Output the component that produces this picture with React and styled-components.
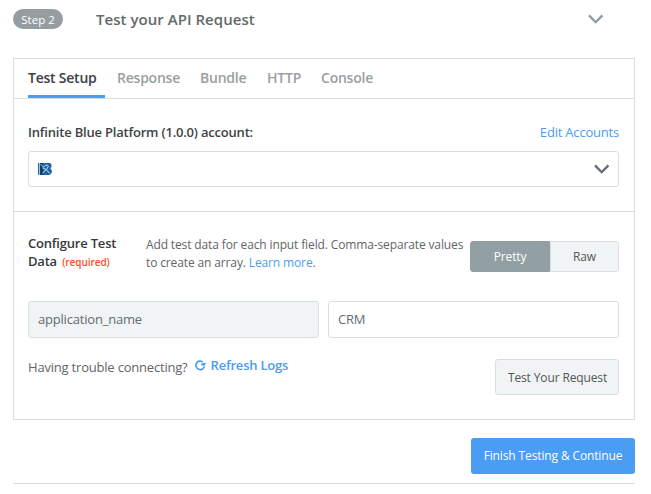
import React from "react";
import styled, { createGlobalStyle } from "styled-components";

const Global = createGlobalStyle`
  * { box-sizing: border-box; }
  body { margin: 0; background: #fff; font-family: "Open Sans", "Noto Sans", sans-serif; color: #5f6568; font-size: 13px; letter-spacing: -0.2px; }
  button, input { font: inherit; letter-spacing: inherit; margin: 0; }
`;

const Page = styled.main`
  width: 651px; height: 494px; padding: 9px 16px 0 13px; overflow: hidden;
`;
const StepHeader = styled.header`
  display: flex; align-items: center; height: 20px; padding-right: 32px;
`;
const StepBadge = styled.span`
  width: 50px; height: 20px; border-radius: 10px; background: #959da1; color: #fff;
  font-size: 11.5px; line-height: 21px; text-align: center; letter-spacing: 0;
`;
const StepTitle = styled.h1`
  margin: 0 auto 0 33px; font-size: 15px; font-weight: 600; line-height: 20px; color: #65696d; white-space: nowrap;
  letter-spacing: 0.04px;
`;
const Panel = styled.section`
  margin-top: 29px; height: 362px; border: 1px solid #d9dedf;
`;
const Tabs = styled.nav`
  display: flex; gap: 12px; height: 40px; padding-left: 14px; border-bottom: 1px solid #d9dedf;
`;
const Tab = styled.button`
  width: ${(p) => p.$w}px; padding: 0; border: 0; background: none; text-align: left; white-space: nowrap;
  font-size: 14px; font-weight: 600; line-height: 38px; height: 39px; letter-spacing: -0.23px;
  color: ${(p) => (p.$active ? "#3b4045" : "#999f9f")};
  border-bottom: 3px solid ${(p) => (p.$active ? "#499df3" : "transparent")};
`;
const AccountSection = styled.section`
  height: 113px; padding: 23px 15px 0 14px; border-bottom: 1px solid #d9dedf;
`;
const LabelRow = styled.div`
  display: flex; justify-content: space-between; line-height: 20px; height: 29px;
`;
const Label = styled.span`
  font-weight: 600; color: #404346; white-space: nowrap;
`;
const Link = styled.a`
  color: #499df3; white-space: nowrap;
`;
const Select = styled.div`
  display: flex; align-items: center; justify-content: space-between; height: 36px;
  padding: 0 9px; border: 1px solid #d9dedf; border-radius: 3px;
`;
const DataSection = styled.section`
  padding: 22px 15px 0 14px;
`;
const ConfigRow = styled.div`
  display: flex; height: 67px; line-height: 18px;
`;
const ConfigLabel = styled.div`
  width: 118px; font-weight: 600; color: #36393d;
`;
const Required = styled.span`
  font-size: 10px; font-weight: 600; color: #fb4b25; margin-left: 2px; letter-spacing: -0.05px;
`;
const Help = styled.p`
  margin: 2px 0 0; width: 324px; font-size: 12px; letter-spacing: -0.13px; white-space: nowrap;
`;
const Toggle = styled.div`
  display: flex; width: 149px; height: 31px; margin-top: 7px;
`;
const ToggleButton = styled.button`
  width: ${(p) => p.$w}px; padding: 0; font-size: 12px; line-height: 30px; letter-spacing: -0.13px;
  border: 1px solid ${(p) => (p.$active ? "#929fa4" : "#d9dfe1")};
  border-radius: ${(p) => (p.$active ? "3px 0 0 3px" : "0 3px 3px 0")};
  background: ${(p) => (p.$active ? "#929fa4" : "#f0f4f5")};
  color: ${(p) => (p.$active ? "#fff" : "#555")};
`;
const Fields = styled.div`
  display: grid; grid-template-columns: 1fr 1fr; gap: 9px;
`;
const Field = styled.input`
  width: 100%; height: 37px; padding: 0 9px 2px; border: 1px solid #d9dedf; border-radius: 3px; outline: 0;
  background: ${(p) => (p.readOnly ? "#f0f4f5" : "#fff")}; color: #656b6e;
`;
const Actions = styled.div`
  display: flex; margin-top: 20px; line-height: 18px; white-space: nowrap;
`;
const Refresh = styled.a`
  display: flex; align-items: center; gap: 5px; height: 14px; margin-left: 7px; color: #499df3; font-weight: 600;
`;
const TestButton = styled.button`
  width: 124px; height: 36px; margin: 1px 0 0 auto; padding: 1px 0 0 1px; border: 1px solid #d9dfe1; border-radius: 3px;
  background: #f0f4f5; color: #555; font-size: 12px; letter-spacing: -0.13px;
`;
const Footer = styled.footer`
  display: flex; justify-content: flex-end; height: 64px; padding-top: 18px; border-bottom: 1px solid #d9dedf;
`;
const Continue = styled.button`
  width: 164px; height: 36px; padding: 0 0 2px; border: 0; border-radius: 3px; background: #499df3; color: #fff;
  font-size: 12px; letter-spacing: -0.13px; white-space: nowrap;
`;

const Chevron = ({ color }) => (
  <svg width="15" height="10" viewBox="0 0 15 10" fill="none">
    <path d="M1 1.4 7.7 8.2 14.4 1.4" stroke={color} strokeWidth="2.3" />
  </svg>
);

const PlatformLogo = () => (
  <svg width="14" height="12" viewBox="0 0 14 12">
    <path d="M0 0h1.4v12H0z" fill="#286aa2" />
    <path d="M2 0h10q2 .8 1.5 3.5l-1 2 1.5 2.3q0 3.4-3 4.2H2z" fill="#1d65a3" />
    <path d="M2 0h3v12H2z" fill="#123c6e" />
    <path d="m2.6 1.2 3 3 2.4-2.4 2.4 1.4-1.6 3-4.4 3.8M4.4 4.8l4 1.8 3.4 4" stroke="#c3dcec" strokeWidth="1" fill="none" />
  </svg>
);

const RefreshIcon = () => (
  <svg width="11" height="11" viewBox="0 0 11 11">
    <path d="M7.8 1.9A4.3 4.3 0 1 0 9.4 6.4" fill="none" stroke="#499df3" strokeWidth="1.6" />
    <path d="M6.2 5.4V3.6L10.8 2.4 10 5.4z" fill="#499df3" />
  </svg>
);

const tabs = [["Test Setup", 77], ["Response", 71], ["Bundle", 55], ["HTTP", 42], ["Console", 53]];

export default function App() {
  return (
    <Page>
      <Global />
      <StepHeader>
        <StepBadge>Step 2</StepBadge>
        <StepTitle>Test your API Request</StepTitle>
        <Chevron color="#929a9e" />
      </StepHeader>
      <Panel>
        <Tabs>
          {tabs.map(([name, w], i) => (
            <Tab key={name} $w={w} $active={i === 0}>{name}</Tab>
          ))}
        </Tabs>
        <AccountSection>
          <LabelRow>
            <Label>Infinite Blue Platform (1.0.0) account:</Label>
            <Link>Edit Accounts</Link>
          </LabelRow>
          <Select>
            <PlatformLogo />
            <Chevron color="#626c72" />
          </Select>
        </AccountSection>
        <DataSection>
          <ConfigRow>
            <ConfigLabel>Configure Test<br />Data <Required>(required)</Required></ConfigLabel>
            <Help>Add test data for each input field. Comma-separate values<br />to create an array. <Link>Learn more</Link>.</Help>
            <Toggle>
              <ToggleButton $w={80} $active>Pretty</ToggleButton>
              <ToggleButton $w={69}>Raw</ToggleButton>
            </Toggle>
          </ConfigRow>
          <Fields>
            <Field readOnly value="application_name" />
            <Field defaultValue="CRM" />
          </Fields>
          <Actions>
            <span>Having trouble connecting?</span>
            <Refresh><RefreshIcon />Refresh Logs</Refresh>
            <TestButton>Test Your Request</TestButton>
          </Actions>
        </DataSection>
      </Panel>
      <Footer>
        <Continue>Finish Testing &amp; Continue</Continue>
      </Footer>
    </Page>
  );
}
